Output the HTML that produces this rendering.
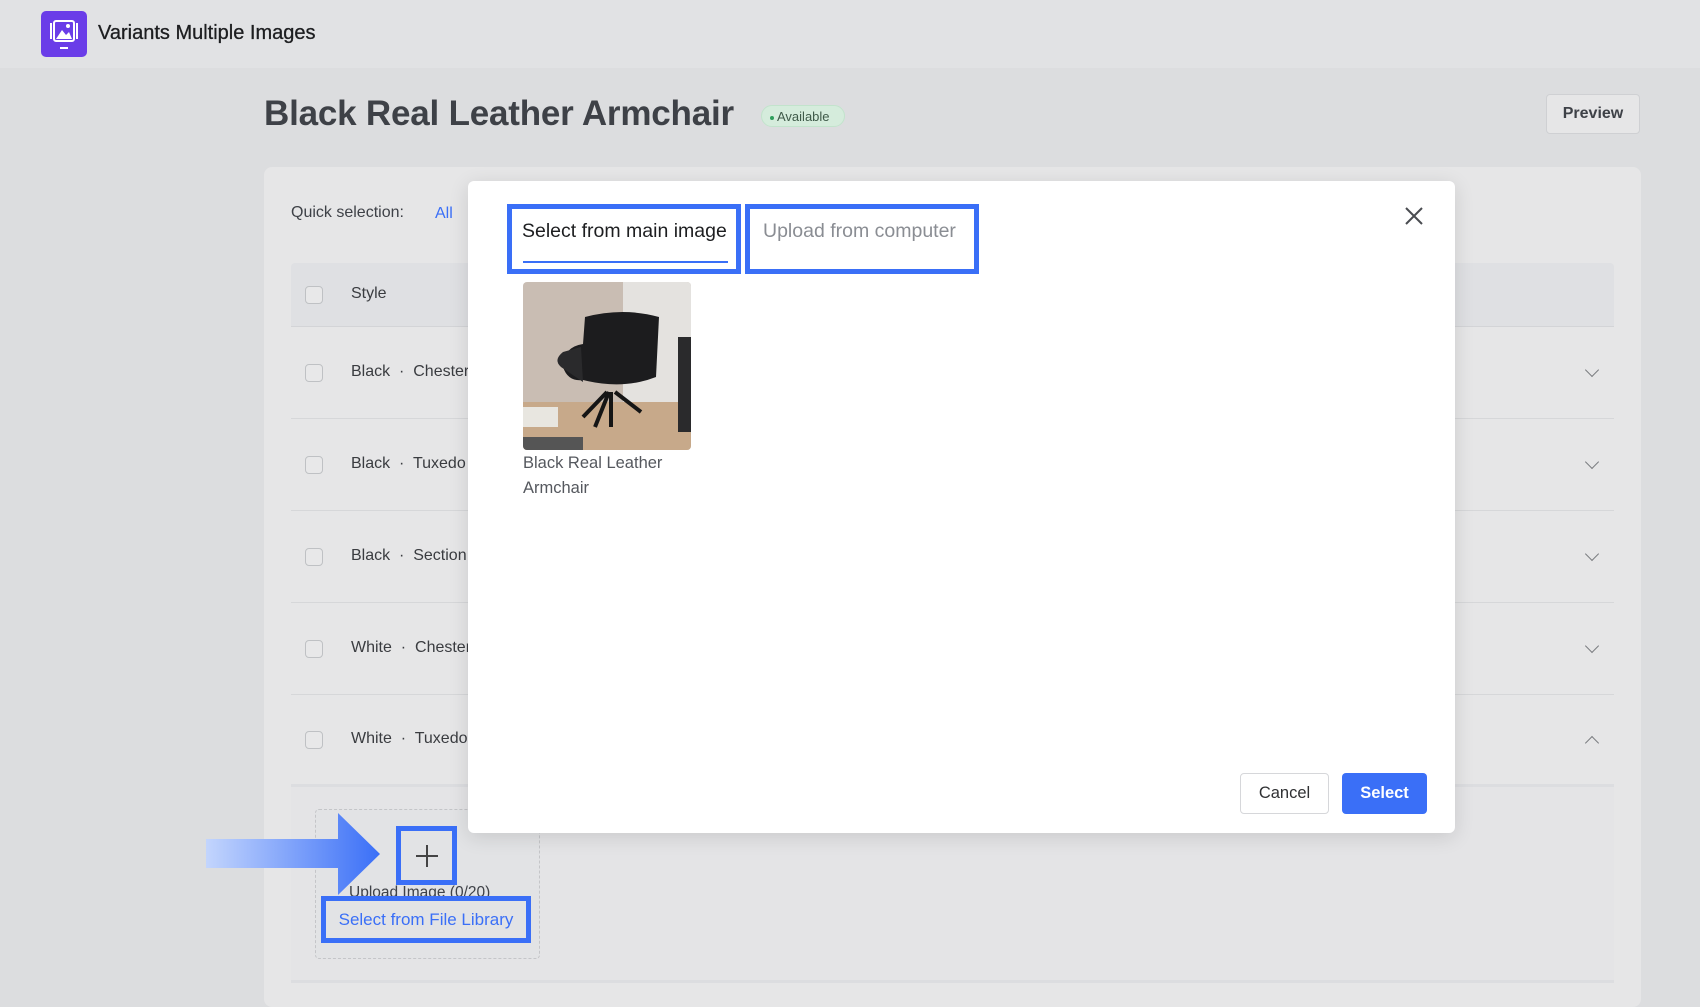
<!DOCTYPE html>
<html><head><meta charset="utf-8"><style>
*{box-sizing:border-box;margin:0;padding:0}
body{width:1700px;height:1001px;overflow:hidden;background:#dcdddf;font-family:"Liberation Sans",Arial,sans-serif;position:relative;color:#303133}
.abs{position:absolute}
.hdr{left:0;top:0;width:1700px;height:68px;background:#e1e2e4}
.card{left:264px;top:167px;width:1377px;height:840px;background:#e6e6e7;border-radius:8px}
.row{left:291px;width:1323px;height:92px;border-bottom:1px solid #d6d7d9}
.cb{position:absolute;left:14px;width:18px;height:18px;border:1.5px solid #bfc1c4;border-radius:4px;background:#e8e8e9}
.rt{position:absolute;left:60px;font-size:16px;color:#3a3c40;white-space:pre}
.chev{position:absolute;left:1296px;width:10px;height:10px;border-right:1.6px solid #7a7c80;border-bottom:1.6px solid #7a7c80}
.modal{left:468px;top:181px;width:987px;height:652px;background:#fff;border-radius:6px;box-shadow:0 4px 20px rgba(0,0,0,.12)}
.blue{border:5px solid #3a6ff7}
</style></head><body>
<div class="abs hdr"></div>
<div class="abs" style="left:41px;top:11px;width:46px;height:46px;background:#6a3de8;border-radius:5px">
<svg width="46" height="46" viewBox="0 0 46 46"><rect x="13" y="10" width="20" height="20" rx="2" fill="none" stroke="#fff" stroke-width="2"/><path d="M15 28 L21 19 L25 24 L28 21 L31 28Z" fill="#fff"/><circle cx="27" cy="15" r="2" fill="#fff"/><path d="M10 12v16M36 12v16" stroke="#fff" stroke-width="2"/><rect x="19" y="36" width="8" height="2" fill="#fff"/></svg></div>
<div class="abs" style="left:98px;top:22px;font-size:20px;color:#1d1e20;-webkit-text-stroke:0.3px #1d1e20">Variants Multiple Images</div>
<div class="abs" style="left:264px;top:94px;font-size:35px;font-weight:bold;color:#3e4147;letter-spacing:-0.2px">Black Real Leather Armchair</div>
<div class="abs" style="left:761px;top:105px;width:84px;height:22px;background:#d5ecdc;border:1px solid #c2e3cc;border-radius:11px;font-size:13px;color:#3f5a49;padding:3px 0 0 8px"><span style="display:inline-block;width:4px;height:4px;border-radius:2px;background:#2e9e5b;vertical-align:middle;margin-right:3px"></span>Available</div>
<div class="abs" style="left:1546px;top:94px;width:94px;height:40px;border:1px solid #cfd0d3;border-radius:4px;background:#e6e6e7;font-size:16px;font-weight:bold;color:#3e4147;text-align:center;line-height:38px">Preview</div>
<div class="abs card"></div>
<div class="abs" style="left:291px;top:204px;font-size:16px;color:#3e4147">Quick selection:</div>
<div class="abs" style="left:435px;top:205px;font-size:16px;color:#3a6ff7">All</div>
<div class="abs" style="left:291px;top:263px;width:1323px;height:64px;background:#dfe0e3;border-radius:4px 4px 0 0;border-bottom:1px solid #d3d4d7"><div class="cb" style="top:23px"></div><div class="rt" style="top:22px">Style</div></div>
<div class="abs row" style="top:327px"><div class="cb" style="top:37px"></div><div class="rt" style="top:36px">Black  ·  Chester</div><div class="chev" style="top:38px;transform:rotate(45deg)"></div></div>
<div class="abs row" style="top:419px"><div class="cb" style="top:37px"></div><div class="rt" style="top:36px">Black  ·  Tuxedo</div><div class="chev" style="top:38px;transform:rotate(45deg)"></div></div>
<div class="abs row" style="top:511px"><div class="cb" style="top:37px"></div><div class="rt" style="top:36px">Black  ·  Section</div><div class="chev" style="top:38px;transform:rotate(45deg)"></div></div>
<div class="abs row" style="top:603px"><div class="cb" style="top:37px"></div><div class="rt" style="top:36px">White  ·  Chester</div><div class="chev" style="top:38px;transform:rotate(45deg)"></div></div>
<div class="abs row" style="top:695px;height:92px;border-bottom:3px solid #dcdde0"><div class="cb" style="top:36px"></div><div class="rt" style="top:35px">White  ·  Tuxedo</div><div class="chev" style="top:43px;transform:rotate(-135deg)"></div></div>
<div class="abs" style="left:291px;top:787px;width:1323px;height:196px;background:#e4e4e6;border-bottom:3px solid #dcdde0"></div>
<div class="abs" style="left:315px;top:809px;width:225px;height:150px;border:1.5px dashed #c4c5c8;border-radius:4px;background:#e2e3e5"></div>
<div class="abs" style="left:349px;top:884px;font-size:15.5px;color:#3e4147">Upload Image (0/20)</div>
<div class="abs blue" style="left:396px;top:826px;width:61px;height:59px;background:#e2e3e5"></div>
<div class="abs" style="left:416px;top:855px;width:22px;height:2px;background:#444"></div>
<div class="abs" style="left:426px;top:845px;width:2px;height:22px;background:#444"></div>
<div class="abs blue" style="left:321px;top:896px;width:210px;height:47px;background:#e2e3e5;font-size:17px;color:#3a6ff7;line-height:37px;text-align:center">Select from File Library</div>
<svg class="abs" style="left:206px;top:813px" width="174" height="82"><defs><linearGradient id="g" x1="0" x2="1"><stop offset="0" stop-color="#c3d5fd"/><stop offset="1" stop-color="#3a6ff7"/></linearGradient></defs><path d="M0 26H132V0L174 41L132 82V55H0Z" fill="url(#g)"/></svg>
<div class="abs modal"></div>
<div class="abs blue" style="left:507px;top:204px;width:234px;height:70px"></div>
<div class="abs" style="left:522px;top:220px;font-size:19.5px;color:#1d1e20">Select from main image</div>
<div class="abs" style="left:523px;top:261px;width:205px;height:2px;background:#3a6ff7"></div>
<div class="abs blue" style="left:745px;top:204px;width:234px;height:70px"></div>
<div class="abs" style="left:763px;top:220px;font-size:19.5px;color:#8a8d93">Upload from computer</div>
<svg class="abs" style="left:1404px;top:206px" width="20" height="20"><path d="M2 2L18 18M18 2L2 18" stroke="#4a4c50" stroke-width="2"/></svg>
<svg class="abs" style="left:523px;top:282px;border-radius:4px" width="168" height="168" viewBox="0 0 168 168"><rect width="168" height="168" fill="#c9bdb3"/><rect x="100" width="68" height="168" fill="#e4e2df"/><rect x="0" y="120" width="168" height="48" fill="#c7a98a"/><rect x="155" y="55" width="13" height="95" fill="#2a2a2c"/><rect x="0" y="155" width="60" height="13" fill="#555"/><rect x="0" y="125" width="35" height="20" fill="#e8e6e0"/><path d="M62 35Q100 25 136 35L133 95Q100 108 60 98Q45 100 40 85Q40 65 60 62Z" fill="#1c1c1e"/><path d="M38 85Q30 78 40 70L58 65L60 100Z" fill="#2a2a2c"/><path d="M84 110L60 135M88 110L88 145M92 110L118 130M86 110L72 145" stroke="#151515" stroke-width="4"/></svg>
<div class="abs" style="left:523px;top:451px;font-size:16.5px;line-height:25px;color:#55585e">Black Real Leather<br>Armchair</div>
<div class="abs" style="left:1240px;top:773px;width:89px;height:41px;border:1px solid #d6d7da;border-radius:4px;font-size:16.5px;text-align:center;line-height:39px;color:#303133">Cancel</div>
<div class="abs" style="left:1342px;top:773px;width:85px;height:41px;background:#3a6ff7;border-radius:4px;font-size:16.5px;font-weight:bold;text-align:center;line-height:41px;color:#fff">Select</div>
</body></html>
